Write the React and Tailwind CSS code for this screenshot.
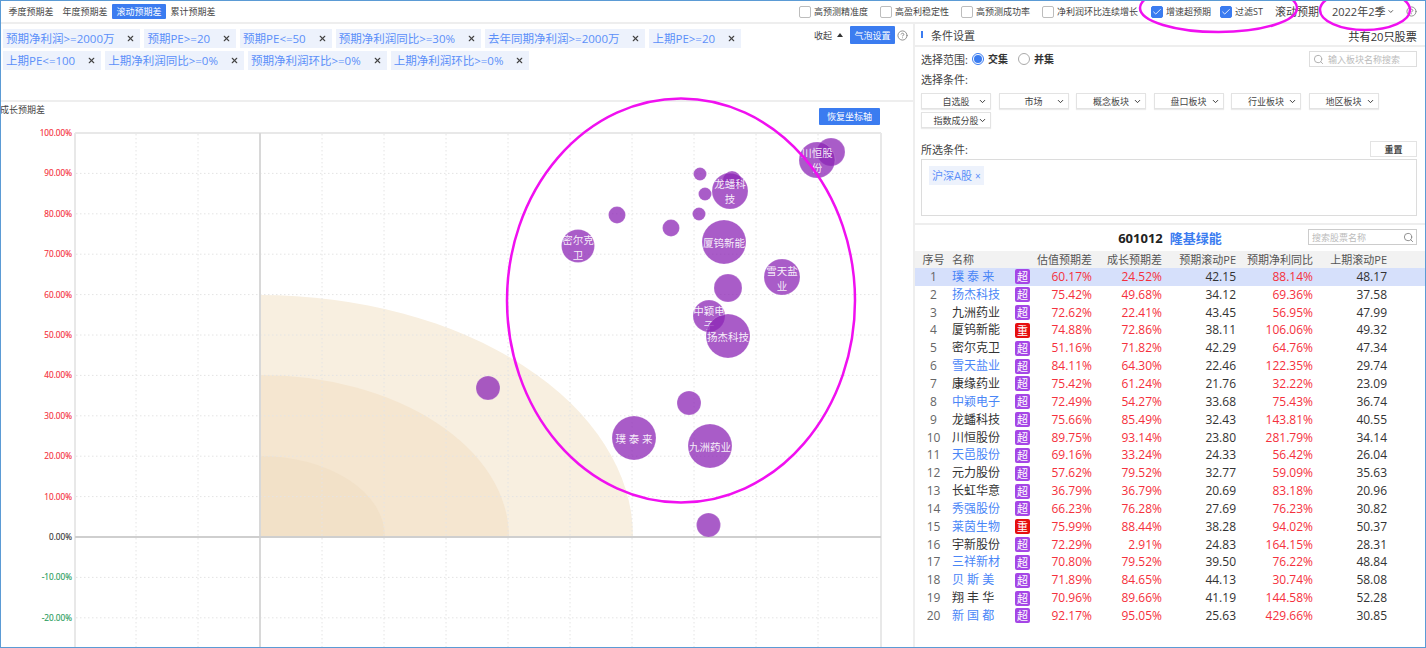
import React from 'react';
import { ChevronDown, Search, Check, X, HelpCircle } from 'lucide-react';

const FONT = 'font-["Open_Sans","Noto_Sans_CJK_SC",sans-serif]';

const modes = ['季度预期差', '年度预期差', '滚动预期差', '累计预期差'];
const tags1 = ['预期净利润>=2000万', '预期PE>=20', '预期PE<=50', '预期净利润同比>=30%', '去年同期净利润>=2000万', '上期PE>=20'];
const tags2 = ['上期PE<=100', '上期净利润同比>=0%', '预期净利润环比>=0%', '上期净利润环比>=0%'];
const dropdowns = ['自选股', '市场', '概念板块', '盘口板块', '行业板块', '地区板块', '指数成分股'];

const rows = [
  ['璞 泰 来', 1, '超', '60.17%', '24.52%', '42.15', '88.14%', '48.17'],
  ['扬杰科技', 1, '超', '75.42%', '49.68%', '34.12', '69.36%', '37.58'],
  ['九洲药业', 0, '超', '72.62%', '22.41%', '43.45', '56.95%', '47.99'],
  ['厦钨新能', 0, '重', '74.88%', '72.86%', '38.11', '106.06%', '49.32'],
  ['密尔克卫', 0, '超', '51.16%', '71.82%', '42.29', '64.76%', '47.34'],
  ['雪天盐业', 1, '超', '84.11%', '64.30%', '22.46', '122.35%', '29.74'],
  ['康缘药业', 0, '超', '75.42%', '61.24%', '21.76', '32.22%', '23.09'],
  ['中颖电子', 1, '超', '72.49%', '54.27%', '33.68', '75.43%', '36.74'],
  ['龙蟠科技', 0, '超', '75.66%', '85.49%', '32.43', '143.81%', '40.55'],
  ['川恒股份', 0, '超', '89.75%', '93.14%', '23.80', '281.79%', '34.14'],
  ['天邑股份', 1, '超', '69.16%', '33.24%', '24.33', '56.42%', '26.04'],
  ['元力股份', 0, '超', '57.62%', '79.52%', '32.77', '59.09%', '35.63'],
  ['长虹华意', 0, '超', '36.79%', '36.79%', '20.69', '83.18%', '20.96'],
  ['秀强股份', 1, '超', '66.23%', '76.28%', '27.69', '76.23%', '30.82'],
  ['莱茵生物', 1, '重', '75.99%', '88.44%', '38.28', '94.02%', '50.37'],
  ['宇新股份', 0, '超', '72.29%', '2.91%', '24.83', '164.15%', '28.31'],
  ['三祥新材', 1, '超', '70.80%', '79.52%', '39.50', '76.22%', '48.84'],
  ['贝 斯 美', 1, '超', '71.89%', '84.65%', '44.13', '30.74%', '58.08'],
  ['翔 丰 华', 0, '超', '70.96%', '89.66%', '41.19', '144.58%', '52.28'],
  ['新 国 都', 1, '超', '92.17%', '95.05%', '25.63', '429.66%', '30.85'],
];

const bubbles = [
  { x: 831, y: 152, r: 14 },
  { x: 817, y: 160, r: 18, t: [['川恒股', 154], ['份', 169]] },
  { x: 732, y: 180, r: 9 },
  { x: 730, y: 191, r: 18, t: [['龙蟠科', 185], ['技', 200]] },
  { x: 700, y: 174, r: 6.5 },
  { x: 705, y: 194, r: 6.5 },
  { x: 699, y: 214, r: 6.5 },
  { x: 617, y: 215, r: 8.5 },
  { x: 671, y: 228, r: 8.5 },
  { x: 578, y: 246, r: 16.5, t: [['密尔克', 241], ['卫', 256]] },
  { x: 724, y: 242, r: 22, t: [['厦钨新能', 244]] },
  { x: 782, y: 277, r: 18, t: [['雪天盐', 272], ['业', 287]] },
  { x: 728, y: 288, r: 14 },
  { x: 709, y: 316, r: 16, t: [['中颖电', 312], ['子', 326]] },
  { x: 728, y: 336, r: 22, t: [['扬杰科技', 338]] },
  { x: 488, y: 388, r: 12 },
  { x: 689, y: 403, r: 12 },
  { x: 634, y: 438, r: 22, t: [['璞 泰 来', 440]] },
  { x: 710, y: 446, r: 22, t: [['九洲药业', 448]] },
  { x: 708.5, y: 525, r: 12 },
];

const yLabels = [100, 90, 80, 70, 60, 50, 40, 30, 20, 10, 0, -10, -20];
const yOf = (v) => 537 - v * 4.04;
const xGrid = [136, 198, 322, 384, 446, 508, 570, 632, 694, 756, 818];

function Box({ checked, label, className = '' }) {
  return (
    <div className={`flex items-center gap-[3px] ${className}`}>
      <span className={`w-[12px] h-[12px] rounded-[2px] border flex items-center justify-center ${checked ? 'bg-[#3b7cf0] border-[#3b7cf0]' : 'bg-white border-[#bdbdbd]'}`}>
        {checked && <Check className="w-[10px] h-[10px] text-white" strokeWidth={2} />}
      </span>
      <span className="text-[9px] text-[#444] leading-none">{label}</span>
    </div>
  );
}

function Tag({ label }) {
  return (
    <div className="h-[19px] bg-[#edf2fc] flex items-center pl-[3px] pr-[5px] gap-[12px]">
      <span className="text-[11.5px] text-[#5b8ff9] leading-none whitespace-nowrap">{label}</span>
      <X className="w-[9px] h-[9px] text-[#444]" strokeWidth={3} />
    </div>
  );
}

function Dropdown({ label }) {
  return (
    <div className="relative w-[70px] h-[16px] border border-[#e3e3e3] shadow-[0_1px_1px_rgba(0,0,0,0.08)] flex items-center justify-center bg-white">
      <span className="text-[9px] text-[#444] leading-none whitespace-nowrap">{label}</span>
      <ChevronDown className="absolute right-[3px] top-[3px] w-[9px] h-[9px] text-[#333]" strokeWidth={2.5} />
    </div>
  );
}

function Chart() {
  return (
    <svg className="block w-[912px] h-[545px]" viewBox="1 102 912 545">
      <path d="M260 537 L260 295 A373 242 0 0 1 633 537 Z" fill="#f8efe0" />
      <path d="M260 537 L260 375 A249 162 0 0 1 509 537 Z" fill="#f5e6d0" />
      <path d="M260 537 L260 456 A124 81 0 0 1 385 537 Z" fill="#f2e1c8" />
      {xGrid.map((x) => (
        <line key={x} x1={x} x2={x} y1="134" y2="648" stroke="#e4e4e4" strokeWidth="1" strokeDasharray="1.5 2.5" />
      ))}
      {yLabels.filter((v) => v !== 0 && v !== 100).map((v) => (
        <line key={v} x1="76" x2="881" y1={yOf(v)} y2={yOf(v)} stroke="#e4e4e4" strokeWidth="1" strokeDasharray="1.5 2.5" />
      ))}
      <line x1="75" x2="881" y1="133" y2="133" stroke="#e8e8e8" strokeWidth="2" />
      <line x1="75" x2="75" y1="133" y2="648" stroke="#e8e8e8" strokeWidth="2" />
      <line x1="881" x2="881" y1="133" y2="648" stroke="#e8e8e8" strokeWidth="2" />
      <line x1="260" x2="260" y1="133" y2="648" stroke="#d8d8d8" strokeWidth="2" />
      <line x1="75" x2="881" y1="537" y2="537" stroke="#cfcfcf" strokeWidth="2" />
      {yLabels.map((v) => (
        <text key={v} x="72" y={yOf(v) + 3} textAnchor="end" fontSize="8.2"
          fill={v > 0 ? '#f5303c' : v < 0 ? '#2a9d5c' : '#333'}
          stroke={v > 0 ? '#f5303c' : v < 0 ? '#2a9d5c' : '#333'} strokeWidth="0.15">{v}.00%</text>
      ))}
      {bubbles.map((b, i) => (
        <g key={i}>
          <circle cx={b.x} cy={b.y} r={b.r} fill="rgba(140,38,182,0.75)" stroke="rgba(255,255,255,0.3)" strokeWidth="0.5" />
          {b.t && b.t.map(([s, y]) => (
            <text key={s} x={b.x} y={y + 3} textAnchor="middle" fontSize="10.5" fill="#fff" fillOpacity="0.9">{s}</text>
          ))}
        </g>
      ))}
    </svg>
  );
}

export default function App() {
  return (
    <div className={`relative w-[1426px] h-[648px] overflow-hidden bg-white border border-[#5b9bd5] flex flex-col ${FONT}`}>
      <div className="h-[23px] shrink-0 border-b-2 border-[#eeeeee] flex items-center pl-[3px] pr-[8px]">
        <div className="flex items-center">
          {modes.map((m, i) => (
            <span key={m} className={`text-[9px] leading-none h-[15px] w-[54px] flex items-center justify-center whitespace-nowrap ${i === 2 ? 'bg-[#3b7cf0] text-white rounded-[1px]' : 'text-[#444]'}`}>{m}</span>
          ))}
        </div>
        <div className="ml-auto flex items-center">
          <div className="flex items-center gap-[12px]">
            <Box label="高预测精准度" />
            <Box label="高盈利稳定性" />
            <Box label="高预测成功率" />
            <Box label="净利润环比连续增长" />
            <Box checked label="增速超预期" className="ml-[1px]" />
            <Box checked label="过滤ST" className="ml-[-3px]" />
          </div>
          <span className="ml-[12px] text-[11px] text-[#444] leading-none">滚动预期</span>
          <div className="ml-[13px] flex items-center gap-[2px] w-[63px]">
            <span className="text-[11px] text-[#444] leading-none whitespace-nowrap">2022年2季</span>
            <ChevronDown className="w-[9px] h-[9px] text-[#333]" strokeWidth={2.5} />
          </div>
          <HelpCircle className="ml-[11px] w-[11px] h-[11px] text-[#888]" />
        </div>
      </div>

      <div className="flex flex-1 min-h-0">
        <div className="relative w-[912px] shrink-0 flex flex-col">
          <div className="h-[78px] shrink-0 border-b-2 border-[#eeeeee] pt-[5px] pl-[2px] flex flex-col gap-[3px] relative">
            <div className="flex gap-[4px]">{tags1.map((t) => <Tag key={t} label={t} />)}</div>
            <div className="flex gap-[4px]">{tags2.map((t) => <Tag key={t} label={t} />)}</div>
            <div className="absolute right-[5px] top-[2px] flex items-center">
              <span className="text-[9px] text-[#444] leading-none">收起</span>
              <span className="ml-[5px] w-0 h-0 border-x-[3px] border-x-transparent border-b-[4px] border-b-[#333]" />
              <span className="ml-[7px] w-[45px] h-[18px] bg-[#3b7cf0] text-white text-[9px] rounded-[1px] flex items-center justify-center leading-none">气泡设置</span>
              <HelpCircle className="ml-[2px] w-[11px] h-[11px] text-[#888]" />
            </div>
          </div>
          <div className="relative flex-1 min-h-0">
            <Chart />
            <span className="absolute left-[-1px] top-[2px] text-[9px] text-[#444] leading-[12px]">成长预期差</span>
            <span className="absolute left-[818px] top-[6px] w-[61px] h-[17px] bg-[#3b7cf0] text-white text-[9px] rounded-[1px] flex items-center justify-center leading-none">恢复坐标轴</span>
          </div>
        </div>

        <div className="flex-1 min-w-0 border-l-2 border-[#eeeeee] flex flex-col">
          <div className="h-[23px] shrink-0 border-b-2 border-[#eeeeee] flex items-center pl-[6px] pr-[8px]">
            <span className="w-[2px] h-[7px] bg-[#3b7cf0]" />
            <span className="ml-[8px] mt-[1px] text-[11px] text-[#444] leading-none">条件设置</span>
            <span className="ml-auto mt-[4px] text-[11.2px] text-[#333] leading-none">共有20只股票</span>
          </div>
          <div className="h-[178px] shrink-0 border-b-2 border-[#eeeeee] pl-[6px] pr-[8px] pt-[3px] flex flex-col">
            <div className="flex items-center h-[18px]">
              <span className="text-[11px] text-[#444] leading-none">选择范围:</span>
              <span className="ml-[4px] w-[12px] h-[12px] rounded-full border border-[#3b7cf0] flex items-center justify-center">
                <span className="w-[8px] h-[8px] rounded-full bg-[#3b7cf0]" />
              </span>
              <span className="ml-[4px] text-[10px] font-bold text-[#333] leading-none">交集</span>
              <span className="ml-[10px] w-[12px] h-[12px] rounded-full border border-[#aaaaaa]" />
              <span className="ml-[4px] text-[10px] font-bold text-[#333] leading-none">并集</span>
              <div className="ml-auto w-[108px] h-[16px] border border-[#dddddd] flex items-center px-[3px] gap-[4px]">
                <Search className="w-[11px] h-[11px] text-[#aaa]" />
                <span className="text-[9px] text-[#bbb] leading-none">输入板块名称搜索</span>
              </div>
            </div>
            <span className="mt-[5px] text-[11px] text-[#444] leading-[14px]">选择条件:</span>
            <div className="mt-[6px] flex flex-wrap gap-x-[7.5px] gap-y-[3px] w-[480px]">
              {dropdowns.map((d) => <Dropdown key={d} label={d} />)}
            </div>
            <div className="mt-[13px] flex items-center justify-between h-[16px]">
              <span className="text-[11px] text-[#444] leading-none">所选条件:</span>
              <span className="w-[47px] h-[16px] border border-[#e3e3e3] text-[9px] font-bold text-[#444] flex items-center justify-center leading-none">重置</span>
            </div>
            <div className="mt-[2px] h-[57px] border border-[#dcdcdc] pt-[6px] pl-[7px] flex items-start">
              <span className="flex items-center h-[19px] px-[3px] gap-[3px] bg-[#edf2fc] text-[11px] text-[#5b8ff9] leading-none">沪深A股<span className="text-[10px]">×</span></span>
            </div>
          </div>
          <div className="relative h-[26px] shrink-0 flex items-center justify-center gap-[7px]">
            <span className="text-[13px] font-bold text-[#222] leading-none">601012</span>
            <span className="text-[13px] font-bold text-[#3b7cf0] leading-none">隆基绿能</span>
            <div className="absolute right-[8px] top-[4px] w-[109px] h-[16px] border border-[#cccccc] flex items-center justify-between pl-[3px] pr-[2px]">
              <span className="text-[9px] text-[#bbb] leading-none">搜索股票名称</span>
              <Search className="w-[11px] h-[11px] text-[#888]" />
            </div>
          </div>
          <div className="h-[17px] shrink-0 bg-[#f2f2f2] grid grid-cols-[37px_63px_15px_62px_70px_74px_77px_74px] items-center text-[11px] text-[#555] leading-none">
            <span className="text-center">序号</span>
            <span>名称</span>
            <span />
            <span className="text-right whitespace-nowrap">估值预期差</span>
            <span className="text-right whitespace-nowrap">成长预期差</span>
            <span className="text-right whitespace-nowrap">预期滚动PE</span>
            <span className="text-right whitespace-nowrap">预期净利同比</span>
            <span className="text-right whitespace-nowrap">上期滚动PE</span>
          </div>
          <div className="flex flex-col">
            {rows.map((r, i) => (
              <div key={i} className={`h-[17.85px] shrink-0 grid grid-cols-[37px_63px_15px_62px_70px_74px_77px_74px] items-center text-[12px] leading-none ${i === 0 ? 'bg-[#d6e0fb]' : ''}`}>
                <span className="text-center text-[#666]">{i + 1}</span>
                <span className={`whitespace-nowrap ${r[1] ? 'text-[#4a86f7]' : 'text-[#333]'}`}>{r[0]}</span>
                <span className={`w-[15px] h-[15px] rounded-[2px] text-white text-[11px] flex items-center justify-center ${r[2] === '重' ? 'bg-[#e60f0f]' : 'bg-[#a546e6]'}`}>{r[2]}</span>
                <span className="text-right text-[#f5303c]">{r[3]}</span>
                <span className="text-right text-[#f5303c]">{r[4]}</span>
                <span className="text-right text-[#333]">{r[5]}</span>
                <span className="text-right text-[#f5303c]">{r[6]}</span>
                <span className="text-right text-[#333]">{r[7]}</span>
              </div>
            ))}
          </div>
        </div>
      </div>

      <svg className="absolute left-[-1px] top-[-1px] w-[1426px] h-[648px] pointer-events-none" viewBox="0 0 1426 648" fill="none" stroke="#f010f0" strokeWidth="2.5">
        <ellipse cx="681" cy="300.5" rx="174" ry="202" />
        <ellipse cx="1218.5" cy="8" rx="78.5" ry="24" />
        <ellipse cx="1365" cy="10" rx="45" ry="20" />
      </svg>
    </div>
  );
}
